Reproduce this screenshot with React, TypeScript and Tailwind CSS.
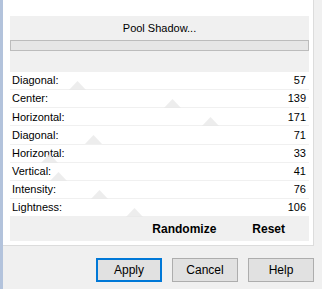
import React from "react";

const rows: [string, number][] = [
  ["Diagonal:", 57],
  ["Center:", 139],
  ["Horizontal:", 171],
  ["Diagonal:", 71],
  ["Horizontal:", 33],
  ["Vertical:", 41],
  ["Intensity:", 76],
  ["Lightness:", 106],
];

export default function App() {
  return (
    <div
      className="w-[322px] h-[289px] bg-[#f0f0f0] flex overflow-hidden text-black"
      style={{ fontFamily: '"Liberation Sans", Arial, sans-serif' }}
    >
      <div className="w-[3px] h-full bg-[#b3c3dc] shrink-0" />
      <div className="flex flex-col w-[311px]">
        <div className="h-[246px] bg-white border-r border-b border-[#dcdcdc] pt-[16px] pl-[7px] pr-[4px] pb-[5px]">
          <div className="h-[225px] bg-[#f0f0f0] flex flex-col">
            <div className="h-[24px] flex items-center justify-center text-[11px] pt-[1px]">
              Pool Shadow...
            </div>
            <div className="h-[11px] border border-[#bcbcbc] bg-[#e6e6e6]" />
            <div className="h-[21px]" />
            <div className="relative grid grid-rows-8 gap-px h-[144px]">
              {rows.map(([label, v], i) => (
                <div key={i} className="relative bg-white flex items-center justify-between pl-[2px] pr-[3px] text-[11px]">
                  <span>{label}</span>
                  <span>{v}</span>
                </div>
              ))}
              {rows.map(([, v], i) => (
                <svg
                  key={"t" + i}
                  className="absolute pointer-events-none"
                  style={{ left: `${v * (298 / 255) - 8}px`, top: `${i * 18.125 + 9}px` }}
                  width="17"
                  height="9"
                  viewBox="0 0 17 9"
                >
                  <polygon points="0,9 8.5,0 17,9" fill="#e9e9e9" fillOpacity="0.8" />
                </svg>
              ))}
            </div>
            <div className="flex-1 flex items-center justify-end pr-[24px] gap-[36px] text-[12px] font-bold">
              <span>Randomize</span>
              <span>Reset</span>
            </div>
          </div>
        </div>
        <div className="flex justify-end gap-[10px] pt-[12px] pr-0 text-[12px]">
          <button className="w-[66px] h-[24px] bg-[#e1e1e1] border-2 border-[#0078d7] flex items-center justify-center">
            Apply
          </button>
          <button className="w-[66px] h-[24px] bg-[#e1e1e1] border border-[#adadad] flex items-center justify-center">
            Cancel
          </button>
          <button className="w-[66px] h-[24px] bg-[#e1e1e1] border border-[#adadad] flex items-center justify-center">
            Help
          </button>
        </div>
      </div>
    </div>
  );
}
